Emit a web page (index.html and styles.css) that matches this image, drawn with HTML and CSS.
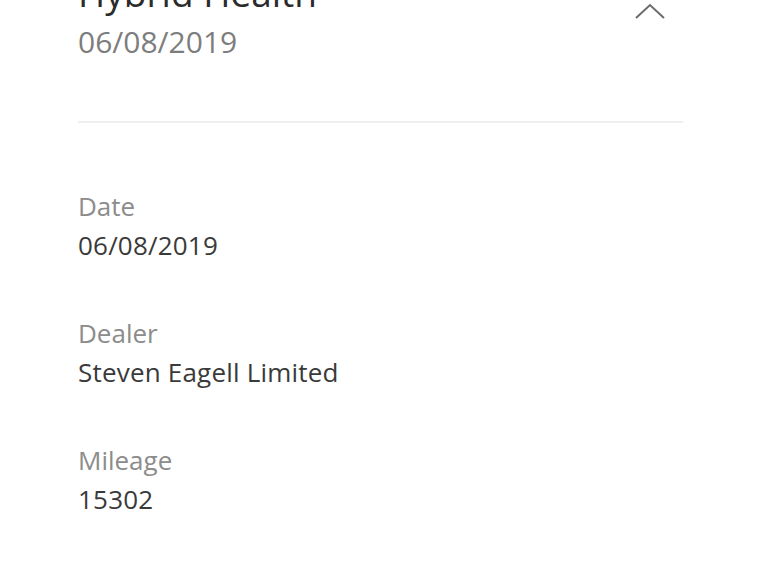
FILE: index.html
```html
<!DOCTYPE html>
<html lang="en">
<head>
  <meta charset="UTF-8">
  <title>Hybrid Health</title>
  <meta name="viewport" content="width=device-width, initial-scale=1.0">
  <link rel="stylesheet" href="styles.css">
</head>
<body>

  <div class="pagina">
    <div class="intestazione">
      <div class="titolo-blocco">
        <h1>Hybrid Health</h1>
        <p class="sottotitolo">06/08/2019</p>
      </div>
      <svg class="chevron" width="32" height="18" viewBox="0 0 32 18">
        <polyline points="2,16 16,3 30,16" fill="none" stroke="#6b6b6b" stroke-width="2"/>
      </svg>
    </div>

    <div class="divisore"></div>

    <div class="dettagli">
      <div class="voce">
        <div class="etichetta">Date</div>
        <div class="valore">06/08/2019</div>
      </div>
      <div class="voce">
        <div class="etichetta">Dealer</div>
        <div class="valore">Steven Eagell Limited</div>
      </div>
      <div class="voce">
        <div class="etichetta">Mileage</div>
        <div class="valore">15302</div>
      </div>
    </div>
  </div>

</body>
</html>
```

FILE: styles.css
```css
    body {
      font-family: "Open Sans", "Noto Sans", sans-serif;
      background: #ffffff;
      margin: 0;
      padding: 0;
      overflow: hidden;
    }

    .pagina {
      width: 605px;
      margin-left: 78px;
    }

    .intestazione {
      display: flex;
      justify-content: space-between;
      align-items: flex-start;
      margin-top: -29px;
    }

    h1 {
      margin: 0;
      font-size: 37px;
      line-height: 44px;
      font-weight: 400;
      color: #2b2b2b;
    }

    .sottotitolo {
      margin: 9px 0 0 0;
      font-size: 30px;
      line-height: 36px;
      color: #7d7d7d;
    }

    .chevron {
      margin-top: 31px;
      margin-right: 17px;
    }

    .divisore {
      height: 2px;
      background-color: #efefef;
      margin-top: 61px;
    }

    .dettagli {
      padding-top: 64px;
      display: flex;
      flex-direction: column;
      gap: 49px;
    }

    .etichetta {
      font-size: 26px;
      line-height: 39px;
      color: #8c8c8c;
    }

    .valore {
      font-size: 26px;
      line-height: 39px;
      letter-spacing: 0.2px;
      color: #3a3a3a;
    }
```
